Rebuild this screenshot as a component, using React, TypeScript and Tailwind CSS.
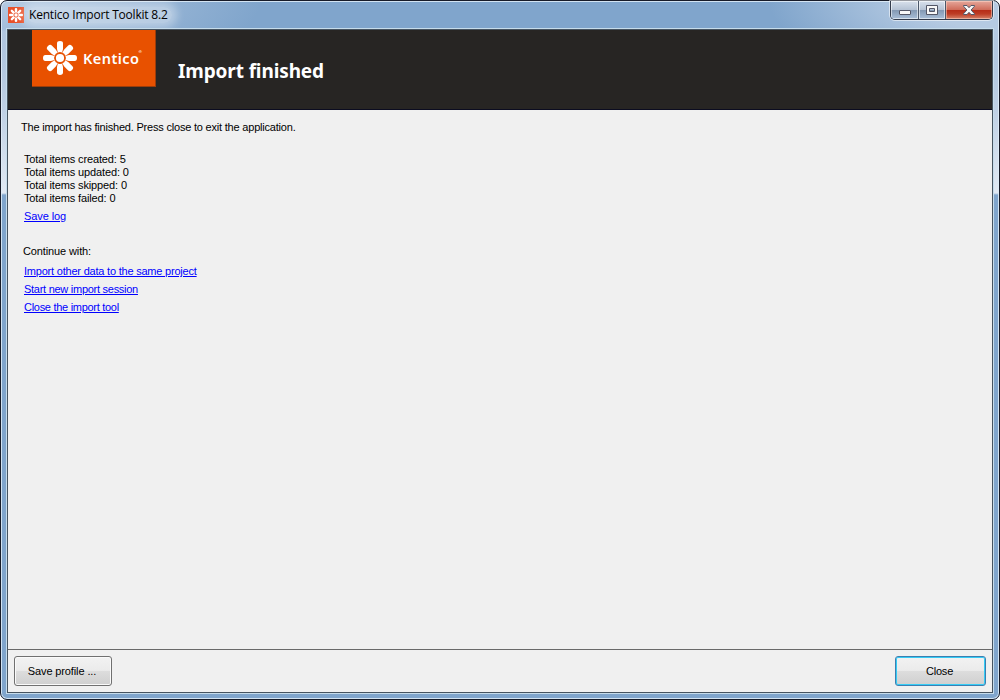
import React from 'react';

const ANGLES = [0, 45, 90, 135, 180, 225, 270, 315];

function Flower({ className }: { className: string }) {
  return (
    <svg viewBox="-17 -17 34 34" className={className} fill="white">
      <circle r="4.1" />
      {ANGLES.map((a) => (
        <path
          key={a}
          transform={`rotate(${a})`}
          d="M-2.1 -5.4 L-3 -9 V-14.6 Q-3 -17 0 -17 Q3 -17 3 -14.6 V-9 L2.1 -5.4 Q0 -6.6 -2.1 -5.4Z"
        />
      ))}
    </svg>
  );
}

function TitleBar() {
  return (
    <header className="flex h-[27px] shrink-0 items-start justify-between">
      <div className="flex h-[28px] items-center">
        <div className="ml-[7px] flex size-4 items-center justify-center bg-[#e8512a]">
          <Flower className="size-[14px]" />
        </div>
        <h1 className="ml-[3px] rounded-full bg-white/35 pl-[2px] pr-1 font-['Open_Sans','Noto_Sans',sans-serif] text-[12px] leading-[16px] tracking-[-0.2px] whitespace-nowrap text-black shadow-[0_0_8px_5px_rgba(255,255,255,0.35)]">
          Kentico Import Toolkit 8.2
        </h1>
      </div>
      <div className="mr-[6px] flex h-[19px] overflow-hidden rounded-b-[5px] border border-t-0 border-[#333b4b] shadow-[0_0_0_1px_rgba(255,255,255,0.55)]">
        <button aria-label="Minimize" className="flex w-[28px] items-center justify-center border-r border-[#4b5769] bg-[linear-gradient(#d9e1ec_0%,#b5c2d4_48%,#8297b2_50%,#a9bfd8_100%)] inset-shadow-[0_0_0_1px_rgba(255,255,255,0.55)]">
          <svg viewBox="0 0 14 12" className="mt-[3px] h-3 w-[14px]">
            <rect x="1.5" y="4.5" width="11" height="4" rx="0.5" fill="#f8f8f8" stroke="#535666" />
          </svg>
        </button>
        <button aria-label="Restore" className="flex w-[27px] items-center justify-center border-r border-[#4b5769] bg-[linear-gradient(#d9e1ec_0%,#b5c2d4_48%,#8297b2_50%,#a9bfd8_100%)] inset-shadow-[0_0_0_1px_rgba(255,255,255,0.55)]">
          <svg viewBox="0 0 12 12" className="size-3">
            <path d="M0.5 1.5H11.5V10.5H0.5Z M3.5 4.5V7.5H8.5V4.5Z" fillRule="evenodd" fill="#f8f8f8" stroke="#535666" />
          </svg>
        </button>
        <button aria-label="Close window" className="flex w-[46px] items-center justify-center bg-[linear-gradient(#e6a79b_0%,#cf6d5b_48%,#b52b17_50%,#bd3d25_72%,#d6836a_100%)] inset-shadow-[0_0_0_1px_rgba(255,220,205,0.5)]">
          <svg viewBox="0 0 12 12" className="size-3">
            <path d="M0.5 1.5H4L6 3.7L8 1.5H11.5V2.2L8.1 6L11.5 9.8V10.5H8L6 8.3L4 10.5H0.5V9.8L3.9 6L0.5 2.2Z" fill="#f8f8f8" stroke="#535666" />
          </svg>
        </button>
      </div>
    </header>
  );
}

function Banner() {
  return (
    <section className="flex h-[80px] shrink-0 items-start border-b border-[#0b0c20] bg-[#272523]">
      <div className="ml-6 flex h-[57px] w-[124px] items-center border-r border-b border-[#9b3d0b] bg-[#e85100]">
        <Flower className="ml-[11px] size-[34px]" />
        <span className="ml-[6px] flex items-start font-['Noto_Sans','Open_Sans',sans-serif] text-[14.5px] leading-[20px] font-semibold tracking-[0.45px] text-white">
          Kentico
          <span className="mt-[1px] ml-[-1px] text-[4px] leading-[6px]">®</span>
        </span>
      </div>
      <h2 className="mt-[27px] ml-[22px] font-['Noto_Sans','Open_Sans',sans-serif] text-[19px] leading-[28px] font-bold tracking-[-0.12px] text-white whitespace-nowrap">
        Import finished
      </h2>
    </section>
  );
}

function Link({ children, className }: { children: React.ReactNode; className: string }) {
  return (
    <a href="#" className={`block w-fit text-[#0000ff] underline decoration-1 underline-offset-[1px] ${className}`}>
      {children}
    </a>
  );
}

export default function App() {
  return (
    <div className="h-[700px] w-[1000px] overflow-hidden bg-white">
      <div className="flex h-full flex-col rounded-[7px] border border-[#171b28] bg-[radial-gradient(ellipse_230px_80px_at_100%_0%,#b5cae2_0%,#b5cae2_35%,transparent_100%),radial-gradient(ellipse_260px_80px_at_0%_0%,#b5cae2_0%,transparent_100%),linear-gradient(#80a5cc_0px,#80a5cc_28px,#a8c0dc_30px,#c0d1e5_110px,#e1e9f3_192px,#80a5cc_194px)] inset-shadow-[0_0_0_1px_rgba(225,237,248,0.85)]">
        <TitleBar />
        <div className="mx-[5px] mb-[5px] flex min-h-0 grow flex-col border border-[#c6dceb]">
          <div className="flex min-h-0 grow flex-col border border-[#46535f] bg-[#f0f0f0] font-['Liberation_Sans',Arial,sans-serif] text-[11px] text-black">
            <Banner />
            <main className="flex grow flex-col items-start pl-4 leading-[13px] whitespace-nowrap">
              <p className="mt-[11px] ml-[-3px] tracking-[-0.2px]">The import has finished. Press close to exit the application.</p>
              <div className="mt-[19px] tracking-[-0.13px]">
                <p>Total items created: 5</p>
                <p>Total items updated: 0</p>
                <p>Total items skipped: 0</p>
                <p>Total items failed: 0</p>
              </div>
              <Link className="mt-[5px] tracking-[-0.1px]">Save log</Link>
              <p className="mt-[22px] ml-[-1px] tracking-[-0.12px]">Continue with:</p>
              <Link className="mt-[7px] tracking-[-0.21px]">Import other data to the same project</Link>
              <Link className="mt-[5px] tracking-[-0.27px]">Start new import session</Link>
              <Link className="mt-[5px] tracking-[-0.29px]">Close the import tool</Link>
            </main>
            <footer className="flex h-[43px] shrink-0 items-start justify-between border-t border-[#696969] px-[6px] pt-[6px]">
              <button className="h-[30px] w-[98px] rounded-[3px] border border-[#707070] bg-[linear-gradient(#f2f2f2_0%,#ebebeb_48%,#dddddd_50%,#cfcfcf_100%)] pr-[2px] tracking-[-0.12px] whitespace-pre inset-shadow-[0_0_0_1px_#fafafa]">
                Save profile ...
              </button>
              <button className="h-[30px] w-[91px] rounded-[3px] border border-[#3c7fb1] bg-[linear-gradient(#f2f2f2_0%,#ebebeb_48%,#dddddd_50%,#cfcfcf_100%)] pr-[2px] tracking-[-0.2px] inset-shadow-[0_0_0_1px_#35ccf5]">
                Close
              </button>
            </footer>
          </div>
        </div>
      </div>
    </div>
  );
}
